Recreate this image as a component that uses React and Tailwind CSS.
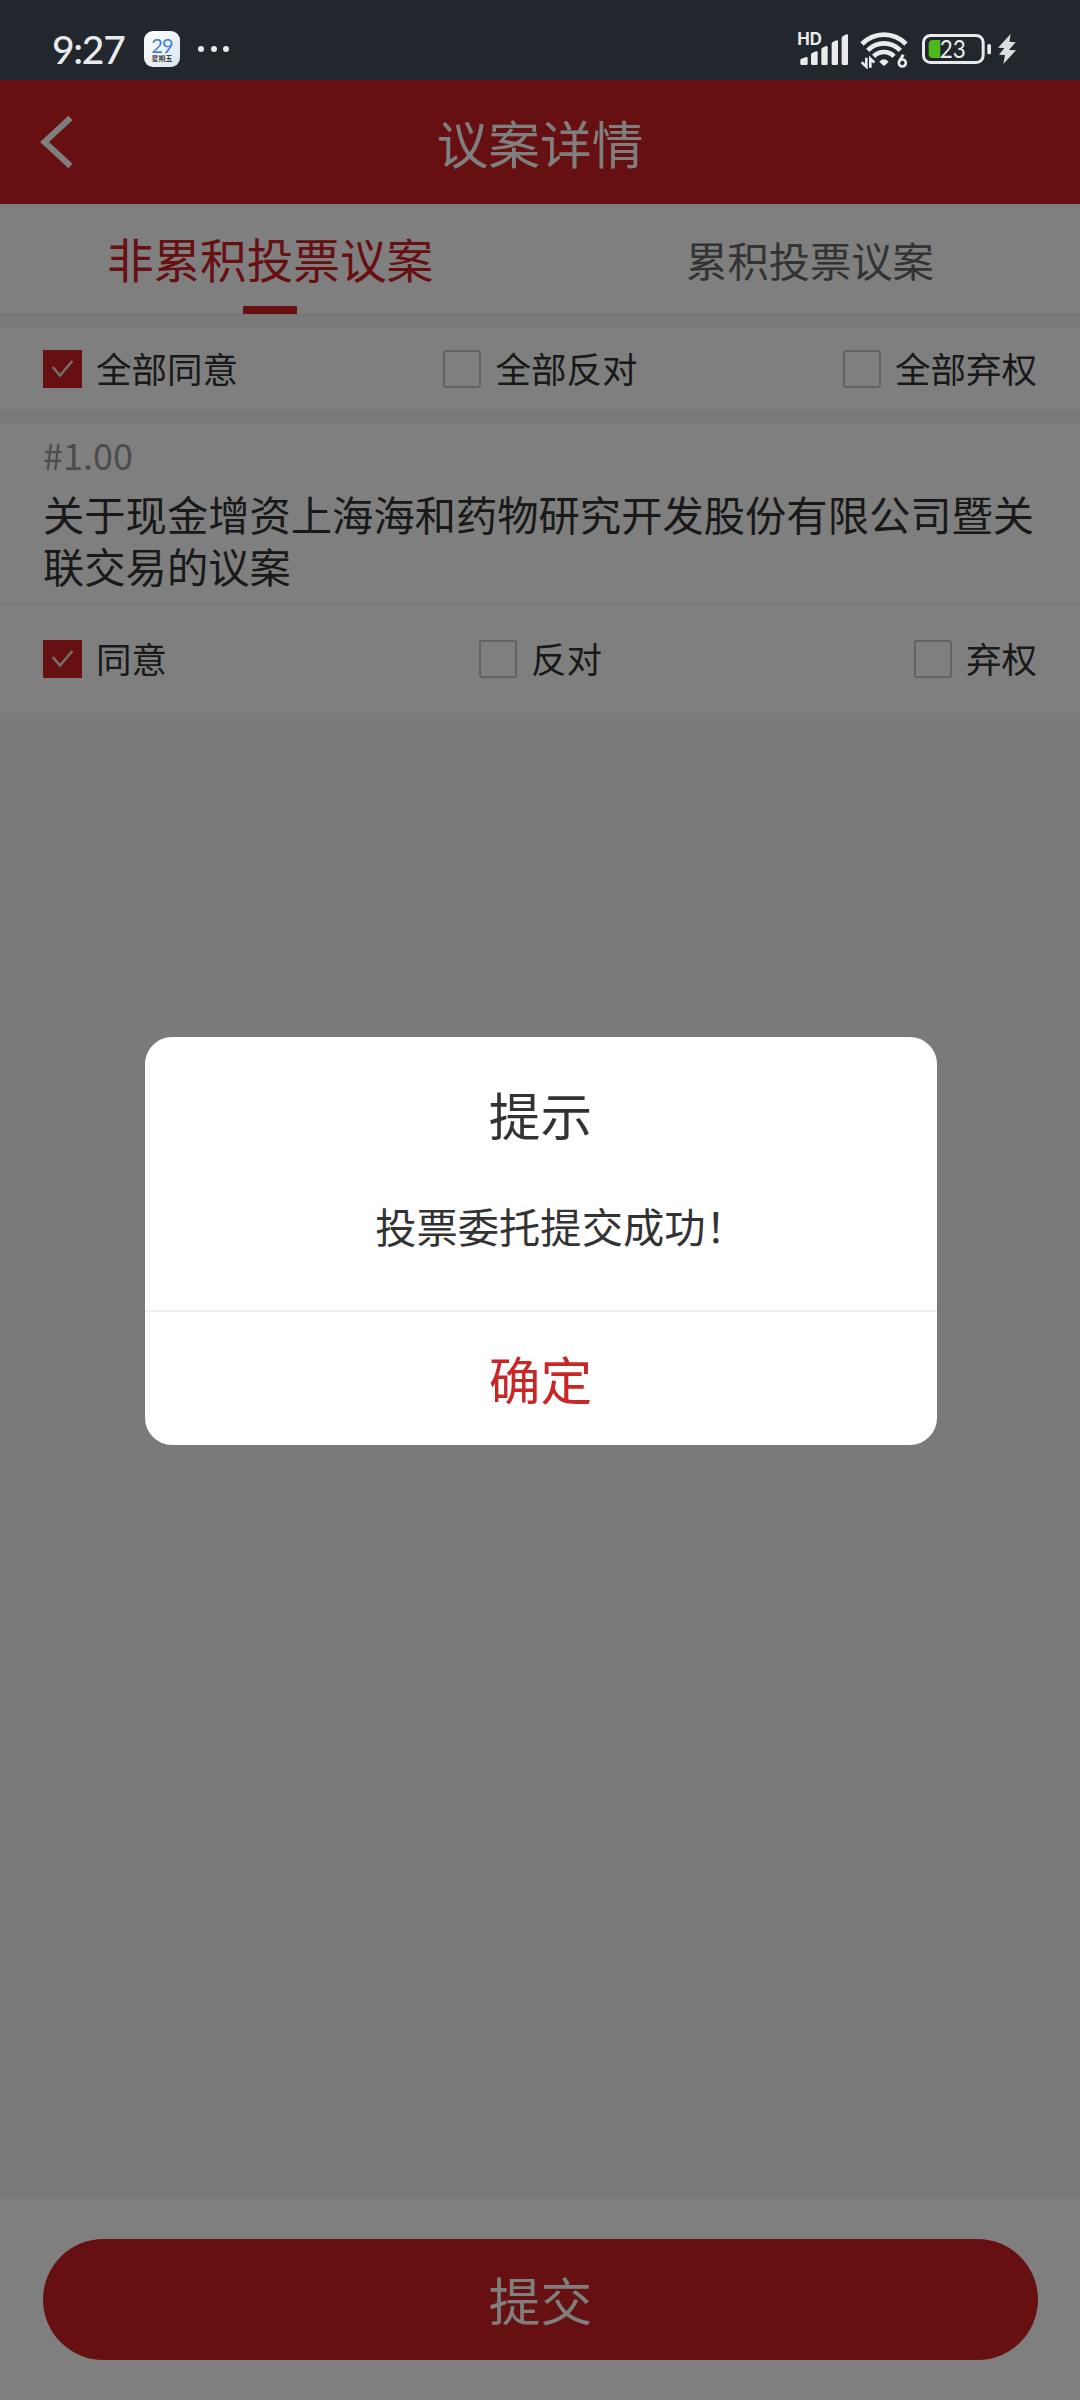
import React from 'react';

const allOptions = [
  { label: '全部同意', checked: true },
  { label: '全部反对', checked: false },
  { label: '全部弃权', checked: false },
];

const itemOptions = [
  { label: '同意', checked: true },
  { label: '反对', checked: false },
  { label: '弃权', checked: false },
];

function SignalIcon() {
  return (
    <svg className="w-[55px] h-[42px]" viewBox="105 81 165 126" fill="#e9eaec">
      <text x="112" y="135" fontSize="50" fontWeight="700" fontFamily="Inter, sans-serif" textLength="74" lengthAdjust="spacingAndGlyphs">HD</text>
      <path d="M121 180q0-3 3-4l14-5q5-1 5 3v17q0 4-4 4h-14q-4 0-4-4z" />
      <path d="M153 165q0-4 3-6l12-5q5-1 5 3v34q0 4-4 4h-12q-4 0-4-4z" />
      <path d="M184 149q0-4 3-6l11-5q5-1 5 3v50q0 4-4 4h-11q-4 0-4-4z" />
      <path d="M215 132q0-4 3-6l11-5q5-1 5 3v67q0 4-4 4h-11q-4 0-4-4z" />
      <path d="M245 115q0-4 3-6l11-6q5-1 5 3v85q0 4-4 4h-11q-4 0-4-4z" />
    </svg>
  );
}

function WifiIcon() {
  return (
    <svg className="w-[48px] h-[38px]" viewBox="300 93 144 114" fill="none" stroke="#e9eaec">
      <path d="M306 132Q334 104 372 104T438 132" strokeWidth="14" />
      <path d="M323 151Q344 130 372 130T421 151" strokeWidth="14" />
      <path d="M341 169Q354 156 372 156T402 169" strokeWidth="14" />
      <path d="M358 185Q371 171 386 185L376 195Q372 199 368 195Z" fill="#e9eaec" stroke="none" />
      <path d="M319 173V200L305 187" strokeWidth="8" />
      <path d="M331 203V176L343 188" strokeWidth="8" />
      <circle cx="427" cy="189" r="10.500" strokeWidth="8" />
      <path d="M418 184L430 164" strokeWidth="9" />
    </svg>
  );
}

function BatteryIcon() {
  return (
    <svg className="w-[71px] h-[38px]" viewBox="483 93 213 114" fill="none">
      <rect x="490.500" y="106.500" width="179" height="81" rx="21" stroke="#e9eaec" strokeWidth="9" />
      <path d="M541 120V174H519q-13 0-13-13v-28q0-13 13-13z" fill="#50b91a" />
      <text x="539" y="174" fontSize="73" fill="#e9eaec" fontFamily="Lato, sans-serif" textLength="78" lengthAdjust="spacingAndGlyphs">23</text>
      <rect x="682" y="132" width="11" height="31" rx="5" fill="#e9eaec" />
    </svg>
  );
}

function BoltIcon() {
  return (
    <svg className="w-5 h-[38px]" viewBox="711 93 60 114" fill="#dcdddf">
      <path d="M752 102L714 143L733 144L717 164L735 165L730 192L768 151L747 150L767 127L748 125Z" />
    </svg>
  );
}

function StatusBar() {
  return (
    <div className="h-20 bg-[#22272e] flex items-start justify-between pl-[52px] pr-[63px] pt-[31px]">
      <div className="flex items-center h-9">
        <span className="w-[76px] text-[39px] leading-9 pb-px font-medium tracking-[-1.3px] text-[#e9eaec] font-['Lato'] whitespace-nowrap">9:27</span>
        <div className="ml-4 w-9 h-9 rounded-[9px] bg-linear-to-br from-white to-[#d9e5ee] flex flex-col items-center pt-[5px]">
          <span className="text-[20px] leading-[18px] tracking-[-0.8px] text-[#3f7fd6] font-['Lato']">29</span>
          <span className="text-[7px] leading-[8px] font-medium text-[#222]">星期五</span>
        </div>
        <div className="ml-[18px] flex gap-[6.500px]">
          <span className="size-1.5 rounded-full bg-[#e9eaec]" />
          <span className="size-1.5 rounded-full bg-[#e9eaec]" />
          <span className="size-1.5 rounded-full bg-[#e9eaec]" />
        </div>
      </div>
      <div className="flex items-end h-[38px]">
        <SignalIcon />
        <div className="ml-2.5 flex"><WifiIcon /></div>
        <div className="ml-[13px] flex"><BatteryIcon /></div>
        <div className="ml-[5px] flex"><BoltIcon /></div>
      </div>
    </div>
  );
}

function Option({ label, checked }) {
  return (
    <div className="flex items-center">
      {checked ? (
        <span className="w-[39px] h-[38px] bg-[#cc2024] flex">
          <svg className="w-full h-full" viewBox="0 0 39 38" fill="none" stroke="#f0dada" strokeWidth="2.600">
            <path d="M9.700 17L17 25.500L29.300 11" />
          </svg>
        </span>
      ) : (
        <span className="w-[38px] ml-px h-[38px] border-2 border-[#c6c6c6] rounded-[3px]" />
      )}
      <span className="ml-3.5 pb-0.5 text-[35.500px] leading-[52px] text-[#333]">{label}</span>
    </div>
  );
}

function OptionRow({ options }) {
  return (
    <div className="flex items-center justify-between px-[43px] h-full">
      {options.map((o) => (
        <Option key={o.label} label={o.label} checked={o.checked} />
      ))}
    </div>
  );
}

export default function App() {
  return (
    <div className="w-[1080px] h-[2400px] flex flex-col overflow-hidden font-['Noto_Sans_CJK_SC',sans-serif]">
      <StatusBar />

      <div className="relative flex-1 flex flex-col bg-[#f4f4f4]">
        {/* Header */}
        <header className="h-[124px] bg-[#cc2024] flex items-center px-10 text-white">
          <svg className="w-9 h-[54px]" viewBox="0 0 36 54" fill="none" stroke="currentColor" strokeWidth="6">
            <path d="M30.500 3L4.500 27L30.500 51" />
          </svg>
          <h1 className="flex-1 text-center text-[51.700px] leading-[76px] mr-9 pb-px">议案详情</h1>
        </header>

        {/* Tabs */}
        <div className="h-[111px] bg-white flex border-b border-[#e6e6e6]">
          <div className="w-1/2 flex flex-col items-center justify-between text-[#cc2024]">
            <span className="text-[46.600px] leading-[68px] pt-5">非累积投票议案</span>
            <span className="w-[54px] h-2 bg-[#cc2024]" />
          </div>
          <div className="w-1/2 flex justify-center">
            <span className="text-[41.300px] leading-[60px] pt-[25px] text-[#666]">累积投票议案</span>
          </div>
        </div>

        <div className="mt-[13px] h-[82px] bg-white">
          <OptionRow options={allOptions} />
        </div>

        <div className="mt-3.5 h-[289px] bg-white flex flex-col">
          <div className="h-[180px] px-[43px] pt-1 border-b border-[#e8e8e8]">
            <p className="text-[36px] leading-[52px] text-[#999]">#1.00</p>
            <p className="mt-[7px] text-[41.300px] leading-[52px] text-[#333]">
              关于现金增资上海海和药物研究开发股份有限公司暨关联交易的议案
            </p>
          </div>
          <div className="flex-1">
            <OptionRow options={itemOptions} />
          </div>
        </div>

        {/* Submit */}
        <footer className="mt-auto h-[202px] bg-white pl-[43px] pr-[42px] pt-[41px]">
          <button className="w-full h-[121px] rounded-full bg-[#cc2024] text-white text-[51.700px] leading-[76px] pb-0.5">提交</button>
        </footer>

        {/* Mask */}
        <div className="absolute inset-0 bg-black/50" />

        {/* Dialog */}
        <div className="absolute left-[144.500px] top-[956.500px] w-[792px] h-[408px] bg-white rounded-[27px] flex flex-col text-center text-[#333]">
          <h2 className="pt-[39px] text-[51.700px] leading-[76px]">提示</h2>
          <p className="mt-[43px] pl-[41px] text-[41.300px] leading-[60px]">投票委托提交成功！</p>
          <button className="mt-auto h-[135px] border-t-2 border-[#eee] text-[51.700px] leading-[76px] text-[#c62828]">确定</button>
        </div>
      </div>
    </div>
  );
}
